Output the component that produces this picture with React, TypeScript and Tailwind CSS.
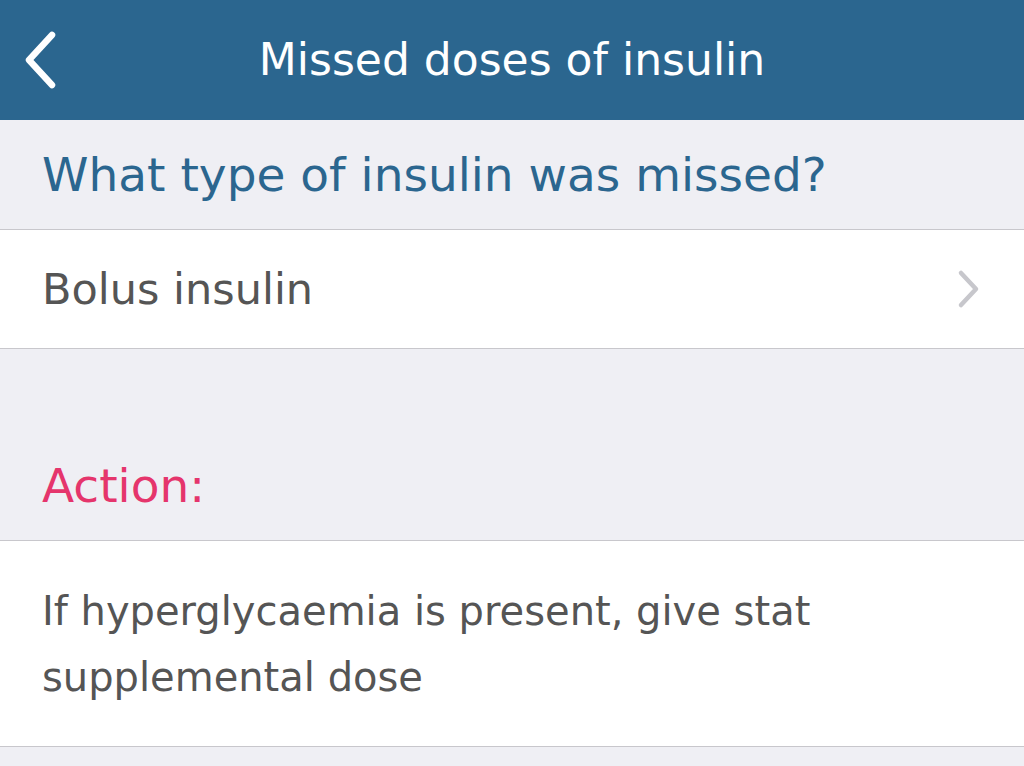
import React from 'react'

function BackChevron() {
  return (
    <svg width="38" height="62" viewBox="0 0 38 62" fill="none" className="shrink-0">
      <path d="M31 6 L8 31 L31 56" stroke="white" strokeWidth="6.5" strokeLinecap="round" strokeLinejoin="round" />
    </svg>
  )
}

function RowChevron() {
  return (
    <svg width="26" height="40" viewBox="0 0 26 40" fill="none" className="shrink-0">
      <path d="M5 4 L20 20 L5 36" stroke="#c7c7cc" strokeWidth="4.5" strokeLinecap="round" strokeLinejoin="round" />
    </svg>
  )
}

export default function App() {
  return (
    <div className="min-h-[766px] w-full bg-[#efeff4] font-['DejaVu_Sans',sans-serif]">
      {/* Header */}
      <div className="relative flex h-[120px] items-center justify-center bg-[#2b668f]">
        <div className="absolute left-[21px] top-[29px]">
          <BackChevron />
        </div>
        <h1 className="text-[44px] text-white">Missed doses of insulin</h1>
      </div>

      {/* Question */}
      <div className="flex h-[110px] items-center border-b border-[#c8c7cc] px-[42px] pt-[2px]">
        <h2 className="text-[47px] text-[#2b668f]">What type of insulin was missed?</h2>
      </div>

      {/* Selected answer */}
      <div className="flex h-[119px] items-center justify-between border-b border-[#c8c7cc] bg-white pl-[42px] pr-[42px]">
        <span className="text-[43px] text-[#555555]">Bolus insulin</span>
        <RowChevron />
      </div>

      {/* Action heading */}
      <div className="flex h-[192px] items-end border-b border-[#c8c7cc] px-[42px] pb-[19px]">
        <h3 className="text-[47px] text-[#e5356c]">Action:</h3>
      </div>

      {/* Action text */}
      <div className="flex h-[206px] items-center border-b border-[#c8c7cc] bg-white px-[42px]">
        <p className="max-w-[820px] text-[40px] leading-[66px] text-[#555555]">
          If hyperglycaemia is present, give stat supplemental dose
        </p>
      </div>
    </div>
  )
}
